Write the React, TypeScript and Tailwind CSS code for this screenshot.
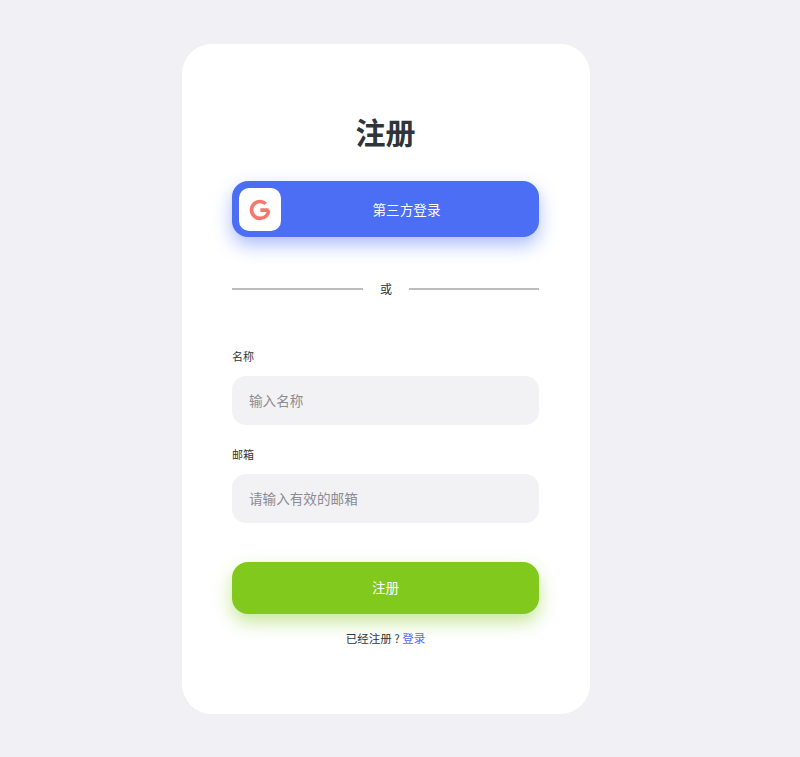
export default function App() {
  const font = { fontFamily: '"Noto Sans CJK SC", sans-serif' };

  return (
    <div
      style={font}
      className="min-h-[757px] bg-[#f1f1f5] flex justify-center pt-[44px] pr-[28px]"
    >
      <div className="w-[408px] h-[670px] bg-white rounded-[30px] pl-[50px] pr-[51px] pt-[67px]">
        <h1 className="text-[30px] leading-[40px] font-bold text-center text-[#30353a]">
          注册
        </h1>

        <button className="mt-[30px] w-full h-[56px] relative rounded-[16px] bg-[#4b6ef5] text-white text-[13.6px] shadow-[0_8px_18px_rgba(75,110,245,0.45)] flex items-center justify-center pl-[42px]">
          <span className="absolute left-[7px] top-[7px] w-[42px] h-[43px] bg-white rounded-[10px] flex items-center justify-center">
            <svg width="22" height="22" viewBox="0 0 24 24" fill="none">
              <path
                d="M21.5 12.2H12.4M21.3 12.2c0 5-3.8 9-9.3 9a9.2 9.2 0 1 1 6.2-16"
                stroke="#f8776c"
                strokeWidth="4"
              />
            </svg>
          </span>
          第三方登录
        </button>

        <div className="mt-[43px] flex items-center h-[18px]">
          <div className="w-[131px] h-[1.5px] bg-[#bdbdbd]" />
          <span className="flex-1 text-center text-[12px] text-[#30353a]">或</span>
          <div className="w-[130px] h-[1.5px] bg-[#bdbdbd]" />
        </div>

        <div className="mt-[50px]">
          <label className="block text-[11px] leading-[16px] text-[#30353a]">名称</label>
          <input
            placeholder="输入名称"
            className="mt-[12px] w-full h-[49px] rounded-[14px] bg-[#f2f2f4] px-[17px] pb-[2px] text-[13.6px] outline-none placeholder:text-[#8b8b92]"
          />
        </div>

        <div className="mt-[21px]">
          <label className="block text-[11px] leading-[16px] text-[#30353a]">邮箱</label>
          <input
            placeholder="请输入有效的邮箱"
            className="mt-[12px] w-full h-[49px] rounded-[14px] bg-[#f2f2f4] px-[17px] pb-[2px] text-[13.6px] outline-none placeholder:text-[#8b8b92]"
          />
        </div>

        <button className="mt-[39px] w-full h-[52px] rounded-[16px] bg-[#82c91e] text-white text-[13.6px] pb-[2px] shadow-[0_8px_18px_rgba(130,201,30,0.45)]">
          注册
        </button>

        <p className="mt-[15px] text-center text-[11.5px] leading-[18px] text-[#30353a]">
          已经注册 ? <a className="text-[#4b6ef5]">登录</a>
        </p>
      </div>
    </div>
  );
}
